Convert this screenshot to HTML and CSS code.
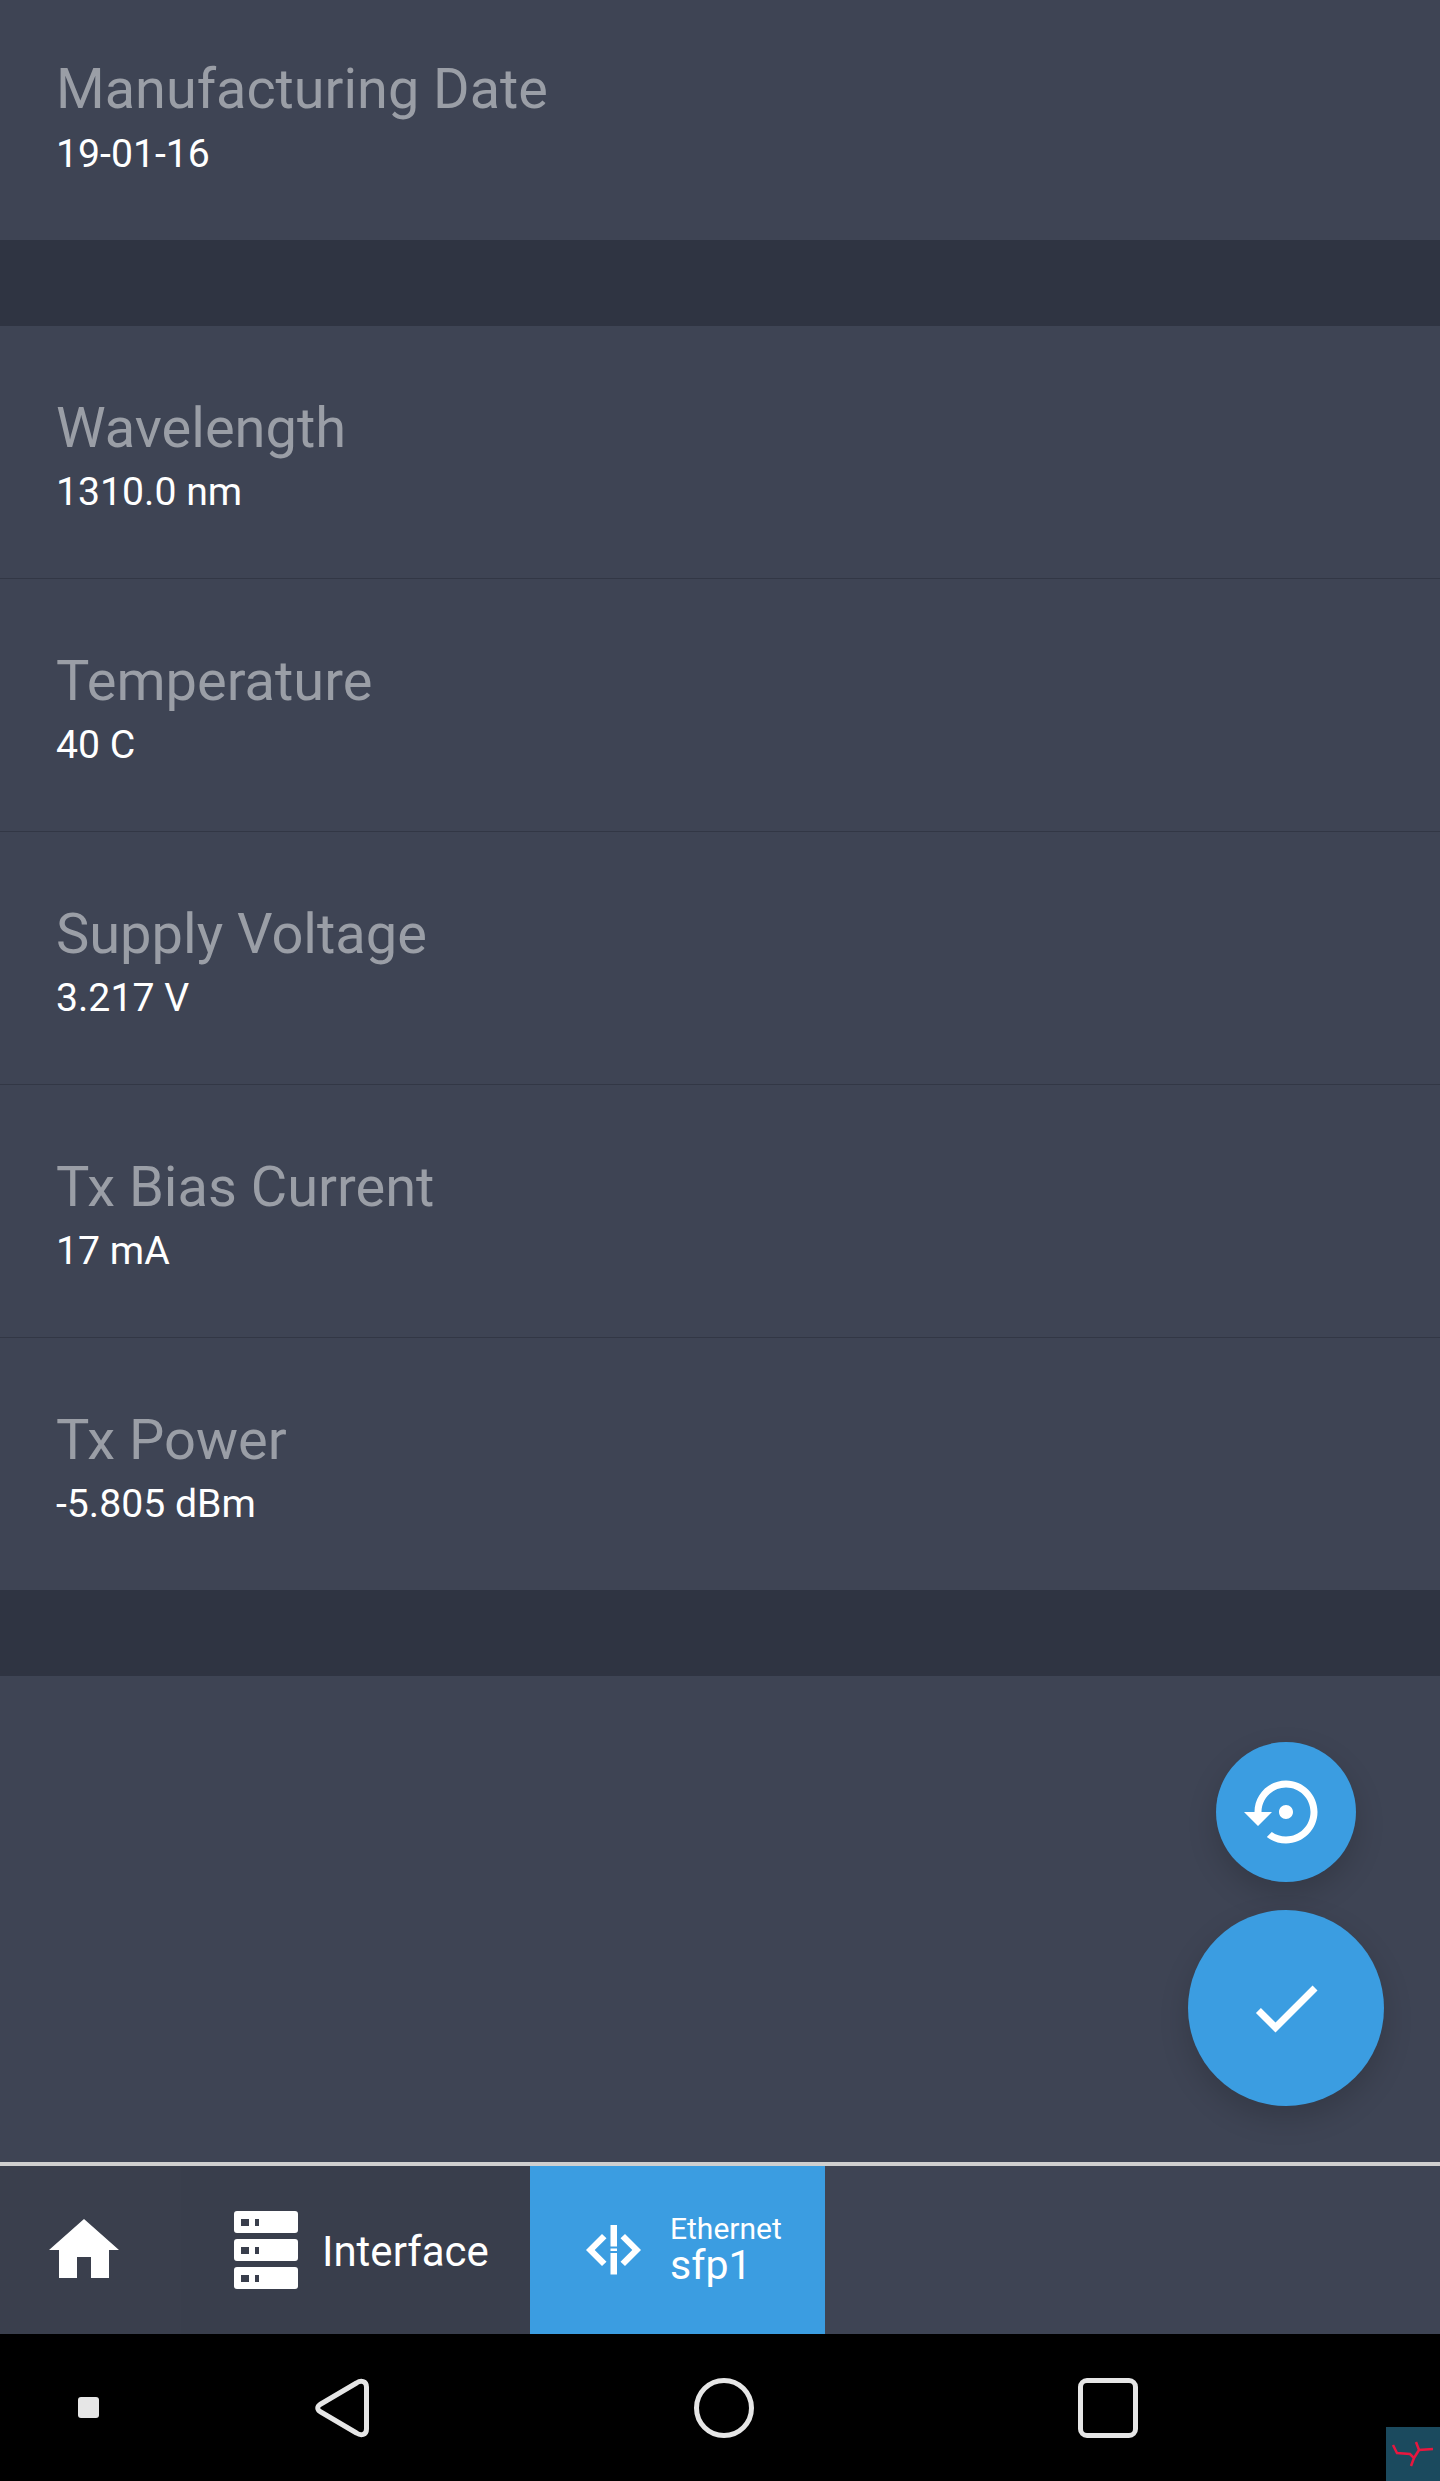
FILE: index.html
```html
<!DOCTYPE html>
<html lang="en">
<head>
  <meta charset="UTF-8">
  <meta name="viewport" content="width=device-width, initial-scale=1.0">
  <title>SFP Info</title>
  <link rel="stylesheet" href="styles.css">
</head>
<body>
  <div class="app">
    <div class="content">
      <div class="row row-cut">
        <div class="label">Manufacturing Date</div>
        <div class="value">19-01-16</div>
      </div>
      <div class="band"></div>
      <div class="row">
        <div class="label">Wavelength</div>
        <div class="value">1310.0 nm</div>
      </div>
      <div class="row">
        <div class="label">Temperature</div>
        <div class="value">40 C</div>
      </div>
      <div class="row">
        <div class="label">Supply Voltage</div>
        <div class="value">3.217 V</div>
      </div>
      <div class="row">
        <div class="label">Tx Bias Current</div>
        <div class="value">17 mA</div>
      </div>
      <div class="row row-last">
        <div class="label">Tx Power</div>
        <div class="value">-5.805 dBm</div>
      </div>
      <div class="band"></div>

      <div class="fab-stack">
        <button class="fab fab-small">
          <svg class="fab-icon" viewBox="0 0 24 24"><path d="M14 12c0-1.1-.9-2-2-2s-2 .9-2 2 .9 2 2 2 2-.9 2-2zm-2-9c-4.97 0-9 4.03-9 9H0l4 4 4-4H5c0-3.87 3.13-7 7-7s7 3.13 7 7-3.13 7-7 7c-1.51 0-2.91-.49-4.06-1.3l-1.42 1.44C8.04 20.3 9.94 21 12 21c4.97 0 9-4.03 9-9s-4.03-9-9-9z"/></svg>
        </button>
        <button class="fab fab-large">
          <svg class="fab-icon" viewBox="0 0 24 24"><path d="M9 16.17L4.83 12l-1.42 1.41L9 19 21 7l-1.41-1.41z"/></svg>
        </button>
      </div>
    </div>

    <div class="tabs">
      <div class="tab tab-home">
        <svg class="icon-home" viewBox="0 0 70 59"><path d="M35 0L70 31H60V59H42V38H28V59H10V31H0z"/></svg>
      </div>
      <div class="tab tab-interface">
        <svg class="icon-server" viewBox="0 0 64 78">
          <path fill-rule="evenodd" d="M3 0H61a3 3 0 0 1 3 3V19a3 3 0 0 1-3 3H3a3 3 0 0 1-3-3V3a3 3 0 0 1 3-3zM7 8V15H15V8zM21 8V15H25V8z"/>
          <path fill-rule="evenodd" d="M3 28H61a3 3 0 0 1 3 3V47a3 3 0 0 1-3 3H3a3 3 0 0 1-3-3V31a3 3 0 0 1 3-3zM7 36V43H15V36zM21 36V43H25V36z"/>
          <path fill-rule="evenodd" d="M3 56H61a3 3 0 0 1 3 3V75a3 3 0 0 1-3 3H3a3 3 0 0 1-3-3V59a3 3 0 0 1 3-3zM7 64V71H15V64zM21 64V71H25V64z"/>
        </svg>
        <span class="tab-name">Interface</span>
      </div>
      <div class="tab tab-active">
        <svg class="icon-eth" viewBox="0 0 56 50">
          <path d="M0 25L16 9 20.500 13.300 8.700 25 20.500 36.700 16 41z"/>
          <path d="M55 25L39 9 34.500 13.300 46.300 25 34.500 36.700 39 41z"/>
          <path d="M24.500 0H31V21.500H24.500zM24.500 23.500H31V26H24.500zM24.500 28H31V49.500H24.500z"/>
        </svg>
        <div class="tab-text">
          <div class="tab-small">Ethernet</div>
          <div class="tab-big">sfp1</div>
        </div>
      </div>
    </div>

    <div class="sysbar">
      <div class="sys-dot"></div>
      <svg class="sys-back" viewBox="0 0 54 60"><path d="M41.500 5C46 2 51.500 3 51.500 9V51C51.500 57 46 58 41.500 55L5 33.500C2 31.500 2 28.500 5 26.500z"/></svg>
      <div class="sys-home"></div>
      <div class="sys-recent"></div>
    </div>

    <div class="corner">
      <svg viewBox="0 0 54 54"><path d="M7 18L11 26 24 27 28 31 25 39M28 31L33 23 47 22M33 23L30 15"/></svg>
    </div>
  </div>
</body>
</html>
```

FILE: styles.css
```css
html, body {
  margin: 0;
  padding: 0;
  background: #000;
}

.app {
  position: relative;
  width: 1440px;
  height: 2481px;
  overflow: hidden;
  display: flex;
  flex-direction: column;
  font-family: Roboto, "Liberation Sans", sans-serif;
}

.content {
  position: relative;
  flex: 1;
  background: #3e4454;
}

.row {
  box-sizing: border-box;
  height: 253px;
  padding: 74px 0 0 56px;
  border-bottom: 1px solid #323745;
}

.row-cut {
  height: 240px;
  padding-top: 61px;
  border-bottom: 0;
}

.row-cut .value {
  margin-top: 17px;
}

.row-last {
  height: 252px;
  border-bottom: 0;
}

.label {
  font-size: 56px;
  line-height: 56px;
  color: #9a9ea6;
}

.row-cut .label {
  font-size: 55.800px;
}

.value {
  margin-top: 16px;
  font-size: 39.200px;
  line-height: 40px;
  color: #fff;
}

.band {
  height: 86px;
  background: #2f3442;
}

.fab-stack {
  position: absolute;
  right: 56px;
  bottom: 56px;
  display: flex;
  flex-direction: column;
  align-items: center;
  gap: 28px;
}

.fab {
  display: flex;
  align-items: center;
  justify-content: center;
  padding: 0;
  border: 0;
  border-radius: 50%;
  background: #3b9de1;
  box-shadow: 0 12px 30px rgba(0, 0, 0, 0.16);
}

.fab-small {
  width: 140px;
  height: 140px;
}

.fab-large {
  width: 196px;
  height: 196px;
}

.fab-icon {
  width: 84px;
  height: 84px;
  fill: #fff;
}

.tabs {
  display: flex;
  height: 168px;
  border-top: 4px solid #cfcfcf;
  background: #3e4454;
}

.tab {
  box-sizing: border-box;
  display: flex;
  align-items: center;
  color: #fff;
}

.tab-home {
  width: 181px;
  padding: 0 0 3px 49px;
  background: #3a3f4d;
}

.icon-home {
  width: 70px;
  height: 59px;
  fill: #fff;
}

.tab-interface {
  width: 349px;
  padding-left: 53px;
  background: #393e4c;
}

.icon-server {
  width: 64px;
  height: 78px;
  fill: #fff;
}

.tab-name {
  margin: 2px 0 0 24px;
  font-size: 42px;
}

.tab-active {
  width: 295px;
  padding-left: 56px;
  background: #3b9de1;
}

.icon-eth {
  width: 56px;
  height: 50px;
  fill: #fff;
}

.tab-text {
  margin-left: 28px;
  padding-bottom: 3px;
}

.tab-small {
  font-size: 30px;
  line-height: 30px;
}

.tab-big {
  margin-top: 2px;
  font-size: 41px;
  line-height: 38px;
}

.sysbar {
  display: flex;
  align-items: center;
  height: 147px;
  background: #000;
}

.sys-dot {
  width: 21px;
  height: 21px;
  margin-left: 78px;
  border-radius: 3px;
  background: #e6e6e6;
}

.sys-back {
  width: 54px;
  height: 60px;
  margin-left: 216px;
  fill: none;
  stroke: #e6e6e6;
  stroke-width: 5;
  stroke-linejoin: round;
}

.sys-home {
  box-sizing: border-box;
  width: 60px;
  height: 60px;
  margin-left: 325px;
  border: 5px solid #e6e6e6;
  border-radius: 50%;
}

.sys-recent {
  box-sizing: border-box;
  width: 60px;
  height: 60px;
  margin-left: 324px;
  border: 5px solid #e6e6e6;
  border-radius: 9px;
}

.corner {
  position: absolute;
  right: 0;
  bottom: 0;
  width: 54px;
  height: 54px;
  background: #1b4a5e;
}

.corner svg {
  display: block;
  fill: none;
  stroke: #e8173f;
  stroke-width: 2.500;
}
```
